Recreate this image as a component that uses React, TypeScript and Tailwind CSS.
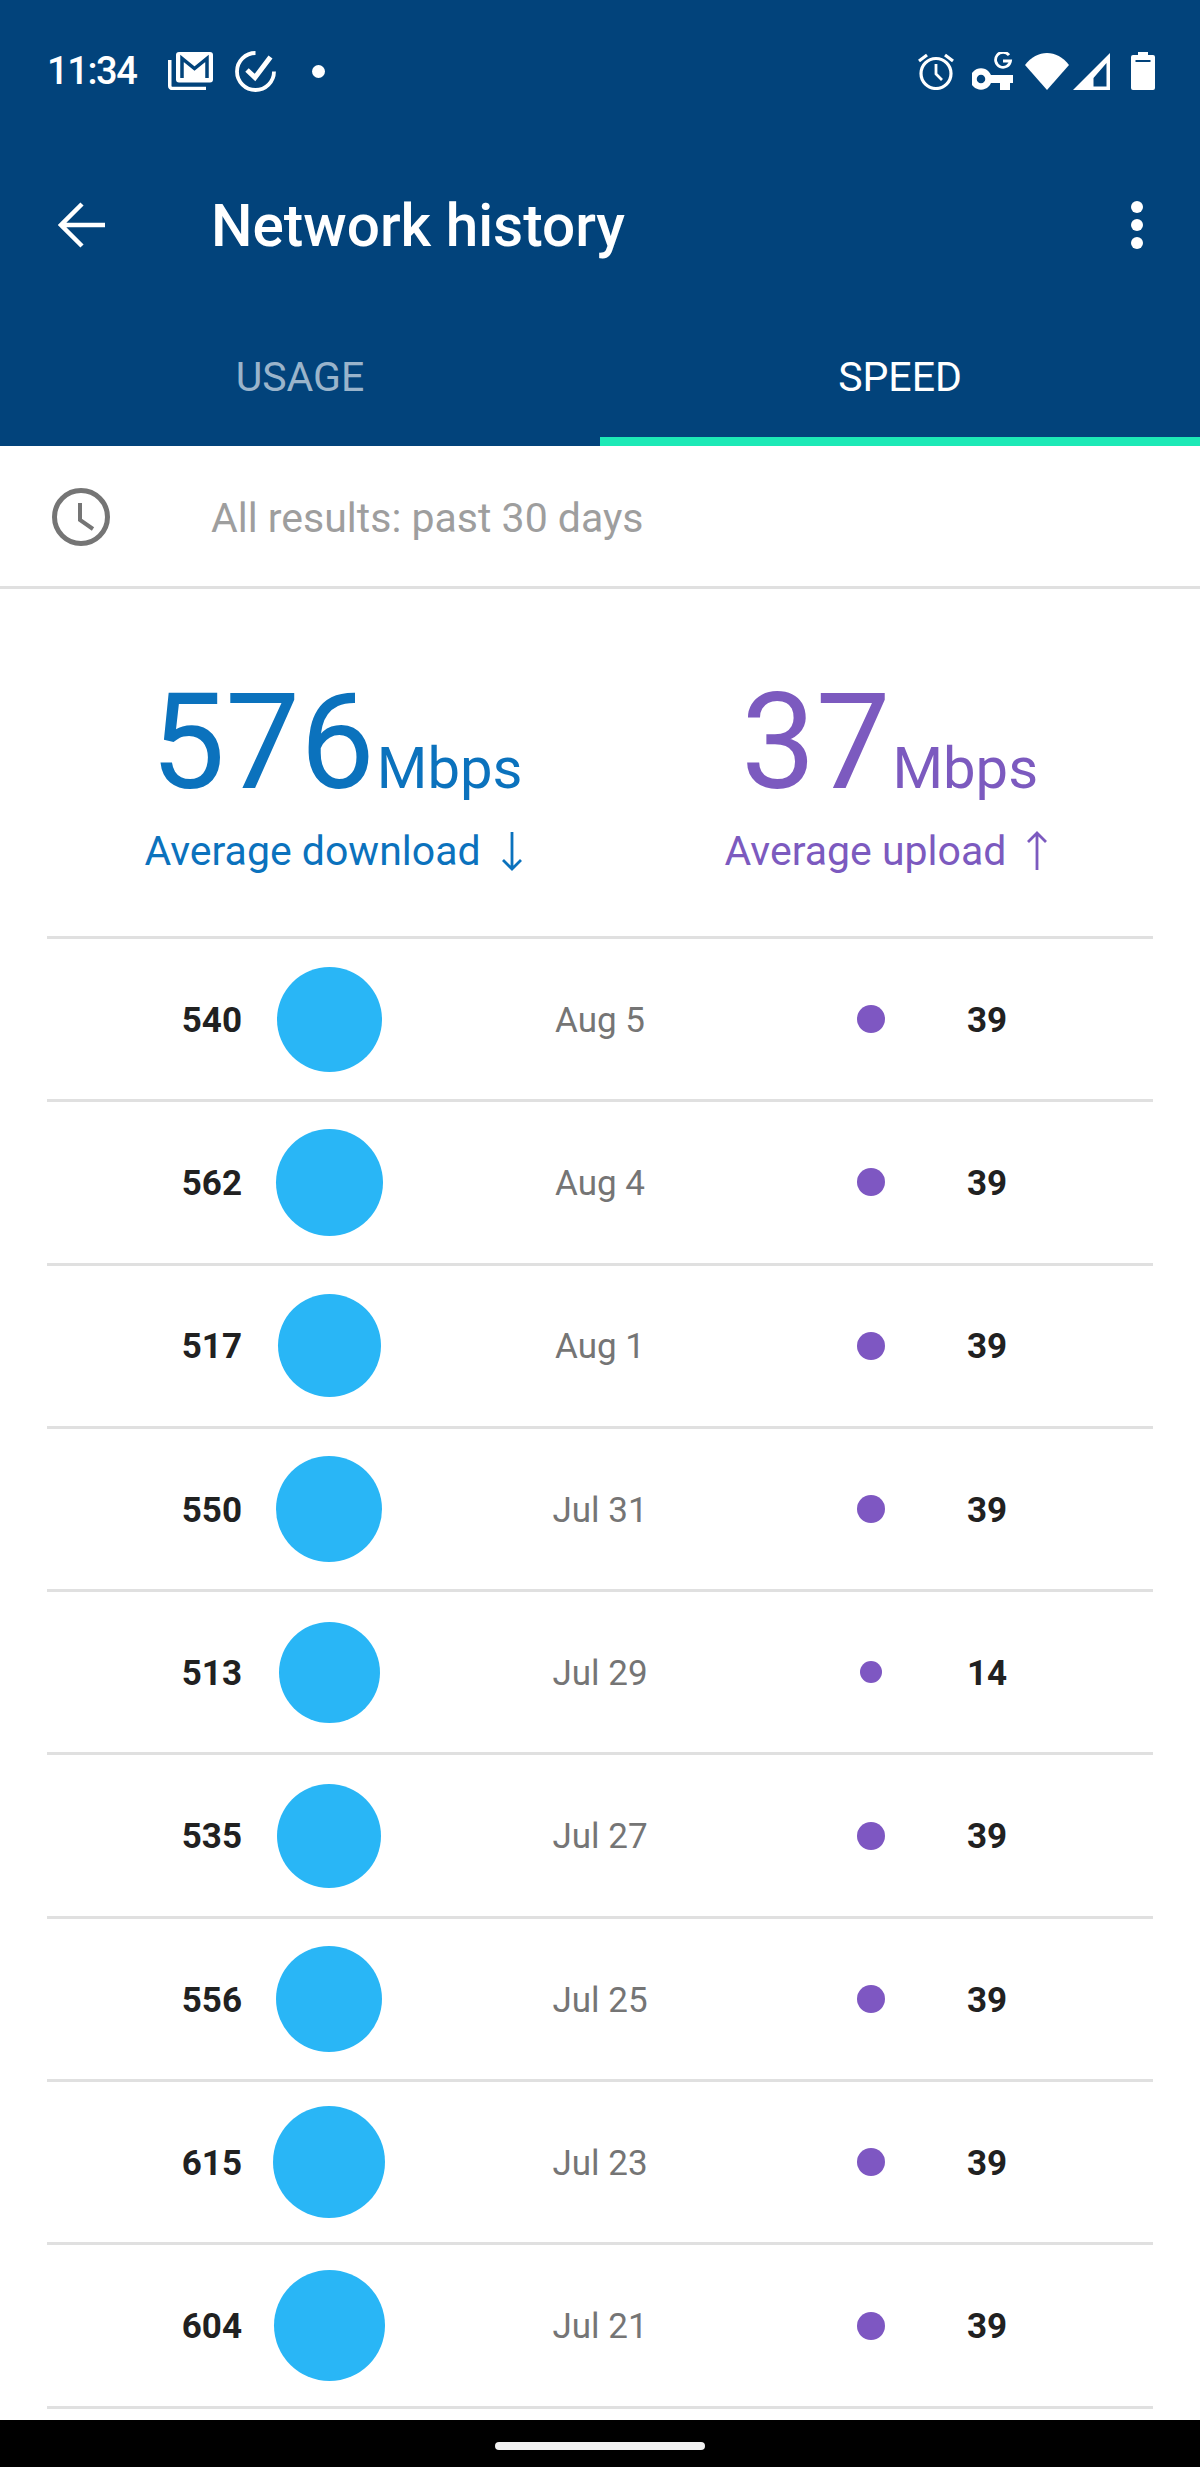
const rows = [
  { n: 540, c: 105, d: "Aug 5", p: 28, u: 39 },
  { n: 562, c: 107, d: "Aug 4", p: 28, u: 39 },
  { n: 517, c: 103, d: "Aug 1", p: 28, u: 39 },
  { n: 550, c: 106, d: "Jul 31", p: 28, u: 39 },
  { n: 513, c: 101, d: "Jul 29", p: 22, u: 14 },
  { n: 535, c: 104, d: "Jul 27", p: 28, u: 39 },
  { n: 556, c: 106, d: "Jul 25", p: 28, u: 39 },
  { n: 615, c: 112, d: "Jul 23", p: 28, u: 39 },
  { n: 604, c: 111, d: "Jul 21", p: 28, u: 39 },
];

function Gmail() {
  return (
    <svg width="45" height="38" viewBox="0 0 45 38" className="shrink-0 mt-[1px]">
      <path d="M1.750 8V34a2.500 2.500 0 0 0 2.500 2.500H38" fill="none" stroke="#fff" strokeWidth="3.500" />
      <rect x="8" y="0" width="37" height="30.500" rx="3" fill="#fff" />
      <path d="M14 26V6.500l12.500 10L39 6.500V26" fill="none" stroke="#02437b" strokeWidth="3.500" />
    </svg>
  );
}
function Check() {
  return (
    <svg width="41" height="41" viewBox="0 0 41 41" className="shrink-0">
      <path d="M39 20.500A18.500 18.500 0 1 1 20.500 2" fill="none" stroke="#fff" strokeWidth="3.800" />
      <path d="M12 19l8 7.500L35.500 6" fill="none" stroke="#fff" strokeWidth="5" />
    </svg>
  );
}
function Alarm() {
  return (
    <svg width="36" height="37" viewBox="0 0 36 37" className="shrink-0">
      <circle cx="18" cy="20.500" r="15" fill="none" stroke="#fff" strokeWidth="3.200" />
      <path d="M18 11v10l6 6" fill="none" stroke="#fff" strokeWidth="2.800" />
      <path d="M1 8l8-6M35 8l-8-6" fill="none" stroke="#fff" strokeWidth="3.200" />
    </svg>
  );
}
function KeyG() {
  return (
    <svg width="41" height="38" viewBox="0 0 41 38" className="shrink-0 -mt-[1px]">
      <path d="M37 3.200A7.500 7.500 0 1 0 38.500 9H31" fill="none" stroke="#fff" strokeWidth="2.800" />
      <circle cx="9" cy="27" r="7.500" fill="none" stroke="#fff" strokeWidth="6.500" />
      <path d="M14 23h27v8h-3v7H28v-7H14z" fill="#fff" />
    </svg>
  );
}
function Wifi() {
  return (
    <svg width="44" height="37" viewBox="0 0 44 37" className="shrink-0">
      <path d="M0 12C12 -4 32 -4 44 12L22 37z" fill="#fff" />
    </svg>
  );
}
function Signal() {
  return (
    <svg width="37" height="37" viewBox="0 0 37 37" className="shrink-0">
      <path fillRule="evenodd" d="M37 0V37H0zM33.500 10L20.500 25V33.500H33.500z" fill="#fff" />
    </svg>
  );
}
function Battery() {
  return (
    <svg width="24" height="38" viewBox="0 0 24 38" className="shrink-0 -mt-[1px]">
      <path d="M7 0h10v3h5a2 2 0 0 1 2 2v31a2 2 0 0 1-2 2H2a2 2 0 0 1-2-2V5a2 2 0 0 1 2-2h5z" fill="#fff" />
      <rect x="4.500" y="8" width="15" height="2" fill="#02437b" />
    </svg>
  );
}

export default function App() {
  return (
    <div className="w-[1200px] h-[2467px] flex flex-col bg-white overflow-hidden font-['Roboto',sans-serif]">
      <header className="bg-[#02437b] text-white shrink-0">
        <div className="h-[169px] pt-[51px] pl-[47px] pr-[45px] flex items-start">
          <span className="w-[121px] text-[38px] leading-[40px] font-medium tracking-[-1.400px]">11:34</span>
          <Gmail />
          <span className="ml-[22px]"><Check /></span>
          <span className="ml-[36px] mt-[14px] w-[13px] h-[13px] rounded-full bg-white" />
          <div className="ml-auto pt-[2px] flex items-start gap-[4px]">
            <span className="mr-[14px]"><Alarm /></span>
            <span className="mr-[8px]"><KeyG /></span>
            <Wifi />
            <span className="mr-[17px]"><Signal /></span>
            <Battery />
          </div>
        </div>
        <div className="h-[112px] flex items-center">
          <span className="ml-[58px] w-[153px]">
            <svg width="47" height="46" viewBox="0 0 47 46">
              <path d="M47 23H4M24 2L3 23l21 21" fill="none" stroke="#fff" strokeWidth="4.500" />
            </svg>
          </span>
          <h1 className="text-[58.500px] font-medium leading-none flex-1 pt-[3px]">Network history</h1>
          <div className="mr-[57px] flex flex-col gap-[5.500px]">
            <span className="block w-[12.500px] h-[12.500px] rounded-full bg-white" />
            <span className="block w-[12.500px] h-[12.500px] rounded-full bg-white" />
            <span className="block w-[12.500px] h-[12.500px] rounded-full bg-white" />
          </div>
        </div>
        <div className="h-[165px] flex">
          <div className="w-[600px] flex justify-center pt-[71px] text-[41px] leading-[50px] text-[#9ab4cb]">USAGE</div>
          <div className="w-[600px] flex justify-center pt-[71px] border-b-[9px] border-[#1de9b6] text-[41px] leading-[50px] text-white">SPEED</div>
        </div>
      </header>
      <div className="h-[143px] shrink-0 flex items-center border-b-[3px] border-[#e0e0e0]">
        <span className="ml-[52px] w-[159px] flex pt-[2px]">
          <svg width="58" height="58" viewBox="0 0 58 58">
            <circle cx="29" cy="29" r="26.500" fill="none" stroke="#757575" strokeWidth="5" />
            <path d="M28 15v17l13 9" fill="none" stroke="#757575" strokeWidth="4" />
          </svg>
        </span>
        <span className="pt-[5px] text-[41px] text-[#9e9e9e]">All results: past 30 days</span>
      </div>
      <section className="h-[347px] shrink-0 px-[47px] flex pt-[89px]">
        <div className="w-[573px] flex flex-col items-center text-[#0b72bd]">
          <div className="flex items-baseline h-[130px] pl-[6px]">
            <span className="text-[133px] leading-[130px] font-normal">576</span>
            <span className="ml-[2px] text-[58px] leading-[130px]">Mbps</span>
          </div>
          <div className="text-[41px] leading-[50px] flex items-center mt-[18px]">
            Average download
            <svg width="22" height="40" viewBox="0 0 22 40" className="ml-[20px]"><path d="M11 1v37M2 29l9 9 9-9" fill="none" stroke="#0b72bd" strokeWidth="2.800" /></svg>
          </div>
        </div>
        <div className="flex-1 flex flex-col items-center text-[#7c5abf]">
          <div className="flex items-baseline h-[130px] pl-[6px]">
            <span className="text-[133px] leading-[130px] font-normal">37</span>
            <span className="ml-[2px] text-[58px] leading-[130px]">Mbps</span>
          </div>
          <div className="text-[41px] leading-[50px] flex items-center mt-[18px]">
            Average upload
            <svg width="22" height="40" viewBox="0 0 22 40" className="ml-[20px]"><path d="M11 39V2M2 11l9-9 9 9" fill="none" stroke="#7c5abf" strokeWidth="2.800" /></svg>
          </div>
        </div>
      </section>
      <main className="flex-1 mx-[47px] border-t-[3px] border-[#e0e0e0] overflow-hidden">
        {rows.map((r) => (
          <div key={r.d} className="h-[163.300px] border-b-[3px] border-[#e0e0e0] flex items-center">
            <span className="w-[195px] pt-[4px] text-right text-[35px] font-bold text-[#212121]">{r.n}</span>
            <span className="w-[174px] flex justify-center">
              <span className="block rounded-full bg-[#29b6f6]" style={{ width: r.c, height: r.c }} />
            </span>
            <span className="w-[368px] pt-[4px] text-center text-[35px] text-[#757575]">{r.d}</span>
            <span className="w-[174px] flex justify-center">
              <span className="block rounded-full bg-[#7e57c2]" style={{ width: r.p, height: r.p }} />
            </span>
            <span className="w-[58px] pt-[4px] text-center text-[35px] font-bold text-[#212121]">{r.u}</span>
          </div>
        ))}
      </main>
      <footer className="h-[47px] shrink-0 bg-black flex justify-center pt-[22px]">
        <span className="block w-[210px] h-[8px] rounded-full bg-[#f2f2f2]" />
      </footer>
    </div>
  );
}
